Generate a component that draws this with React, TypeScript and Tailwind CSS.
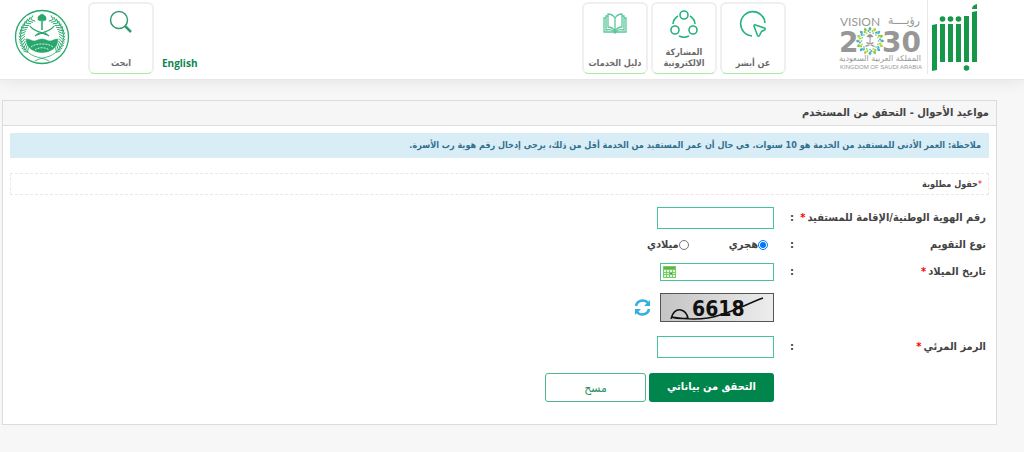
import { useState } from 'react';
import type { ReactNode } from 'react';

const captcha = '6618';

function Tile({ label, children }: { label: string; children: ReactNode }) {
  return (
    <button className="flex h-[72px] w-[66px] flex-col items-center justify-between rounded-md border-2 border-b border-x-[#efefef] border-t-[#efefef] border-b-[#a5ec9b] bg-white pt-1 pb-1 text-[9px] leading-[11px] font-bold text-[#6b6b6b]">
      {children}
      <span className="w-full text-center">{label}</span>
    </button>
  );
}

function AbsherLogo() {
  return (
    <svg className="h-[72px] w-[50px]" viewBox="0 0 50 72" aria-label="أبشر" fill="#16984a">
      <path d="M4 23l5-1v46l-5 1zM12 22h5v38h-5zM20 22h5v38h-5zM28 22h5v38h-5zM36 14h5v46h-5zM44 10l5-1v51h-5z" />
      <path d="M44 7c0-3 2-4 5-5v5z" />
      <circle cx="14.500" cy="17" r="2.800" />
      <circle cx="22.500" cy="17" r="2.800" />
      <circle cx="30.500" cy="17" r="2.800" />
      <circle cx="38.500" cy="66" r="2.800" />
    </svg>
  );
}

function VisionLogo() {
  const colors = ['#4fb3a2', '#b5d334', '#3fb2d0', '#8cc63f'];
  return (
    <svg className="h-[60px] w-[84px]" viewBox="0 0 84 60" direction="ltr" fill="#979797" fontFamily="Lato, sans-serif">
      <text x="1" y="14" fontSize="12">VISION</text>
      <text x="81" y="12" fontSize="12" textAnchor="end" fontFamily="DejaVu Sans Condensed, DejaVu Sans, sans-serif">رؤيــــة</text>
      <text x="0" y="40" fontSize="28" fontWeight="bold" fontFamily="DejaVu Sans, sans-serif">2</text>
      <text x="43" y="40" fontSize="28" fontWeight="bold" fontFamily="DejaVu Sans, sans-serif">30</text>
      <circle cx="31" cy="29" r="12" fill="#fff" />
      {Array.from({ length: 16 }, (_, i) => (
        <g key={i} transform={`rotate(${i * 22.5} 31 29)`}>
          <path d="M31 14.500l1.600 2.300-1.600 2.300-1.600-2.300z" fill={colors[i % 4]} />
          <path d="M33.500 17.500l1.200 1.500-1.200 1.500-1.200-1.500z" fill={colors[(i + 1) % 4]} />
          <circle cx="31" cy="20.500" r="0.800" fill={colors[(i + 2) % 4]} />
        </g>
      ))}
      <path d="M30.500 25h1v7h-1zM31 25.500l-3.500-.5c1-2 2.500-3 3.500-3s2.500 1 3.500 3zM26 34l8-4 1 1-8 4zM36 34l-8-4-1 1 8 4z" />
      <text x="82" y="49" fontSize="8" textAnchor="end" fontFamily="DejaVu Sans, sans-serif">المملكة العربية السعودية</text>
      <text x="1" y="57" fontSize="6" fontFamily="Liberation Sans, sans-serif">KINGDOM OF SAUDI ARABIA</text>
    </svg>
  );
}

function Emblem() {
  const leaves = [];
  for (let a = -60; a <= 45; a += 8) leaves.push(a);
  return (
    <svg className="size-14" viewBox="0 0 56 56" fill="none" stroke="#27a76b">
      <circle cx="28" cy="28" r="26.500" strokeWidth="1.300" />
      <path d="M14 10C2 23 5 40 20 47c5 2 10 2 15 5M42 10c12 13 9 30-6 37-5 2-10 2-15 5" strokeWidth="0.800" />
      {leaves.map((a) => (
        <g key={a} strokeWidth="0.900">
          <path transform={`rotate(${-a} 28 28)`} d="M7 29l-2-4M7 29l4-3" />
          <path transform={`rotate(${a} 28 28)`} d="M49 29l2-4M49 29l-4-3" />
        </g>
      ))}
      <path d="M28 9v12" strokeWidth="1.500" />
      <path d="M28 9l-1 3-3-1 0-3 2-2 2-1 2 1 2 2v3l-3 1z" fill="#27a76b" strokeWidth="0.500" />
      <path d="M16 17c3 5 8 5 17 9M40 17c-3 5-8 5-17 9M21 27l4-3M35 27l-4-3" strokeWidth="1.200" />
      <path d="M12 30c4 0 6 2 8 2s5-2 8-2 6 2 8 2 4-2 8-2c0 18-32 18-32 0z" fill="#27a76b" strokeWidth="0.500" />
      <path d="M17 38c3-2 5-3 11-3s8 1 11 3M21 41c3-3 11-3 14 0" stroke="#d7f2e3" strokeDasharray="2 1" />
    </svg>
  );
}

function Captcha() {
  return (
    <svg className="h-[29px] w-[114px] border border-[#555]" viewBox="0 0 112 27" direction="ltr">
      <defs>
        <linearGradient id="shade">
          <stop stopColor="#c4c4c4" />
          <stop offset="1" stopColor="#ededed" />
        </linearGradient>
      </defs>
      <rect width="112" height="27" fill="url(#shade)" />
      <text x="31" y="22" fontSize="21" fontWeight="bold" fontFamily="DejaVu Sans Condensed, DejaVu Sans, sans-serif" fill="#111">{captcha}</text>
      <path d="M10 25c1-6 5-10 10-9 4 1 6 4 7 8-6 1-10 1-17-1 19 3 35 3 49-2 14-4 27-11 43-17" fill="none" stroke="#111" strokeWidth="1.500" />
    </svg>
  );
}

function Label({ text, htmlFor, required }: { text: string; htmlFor?: string; required?: boolean }) {
  return (
    <div className="flex w-[212px] shrink-0 items-center justify-between pe-4 font-bold">
      <label htmlFor={htmlFor} className="whitespace-nowrap">
        {text}
        {required && <span className="ms-0.5 text-[#f00]">*</span>}
      </label>
      <span>:</span>
    </div>
  );
}

export default function App() {
  const [calendar, setCalendar] = useState('hijri');

  return (
    <div dir="rtl" className="min-h-screen bg-[#f7f7f7] font-['DejaVu_Sans_Condensed','DejaVu_Sans',sans-serif] text-[11px] text-[#444]">
      <header className="flex h-20 items-start justify-between border-b border-[#e8e8e8] bg-white ps-[46px] pe-[14px] shadow-[0_2px_14px_rgba(0,0,0,0.08)]">
        <div className="flex">
          <a href="#" className="border-e border-[#e8e8e8] pt-0.5">
            <AbsherLogo />
          </a>
          <a href="#" className="ms-1 pt-3">
            <VisionLogo />
          </a>
          <nav className="ms-[53px] flex gap-[3px] pt-0.5">
            <Tile label="عن أبشر">
              <svg className="mt-0.5 size-7" viewBox="0 0 28 28" fill="none" stroke="#25b47e" strokeWidth="1.600" strokeLinejoin="round">
                <path d="M13 26A12.200 12.200 0 1 1 26 13" />
                <path d="M15 16c0-1 .5-1.500 1.500-1l9 3c1 .5 1 1.500 0 2l-3 1.500-2 4c-.5 1-1.500 1-2 0z" />
              </svg>
            </Tile>
            <Tile label="المشاركة الالكترونية">
              <svg className="mt-0.5 size-7 shrink-0" viewBox="0 0 28 28" fill="none" stroke="#25b47e" strokeWidth="1.600">
                <circle cx="14" cy="5" r="4" />
                <circle cx="5" cy="20" r="4" />
                <circle cx="23" cy="20" r="4" />
                <path d="M8 6c-3 2-5 5-5 8M20 6c3 2 5 5 5 8M9 26c3 1.500 7 1.500 10 0" />
              </svg>
            </Tile>
            <Tile label="دليل الخدمات">
              <svg className="mt-1 h-6 w-6" viewBox="0 0 24 24" fill="none" stroke="#5cc79c" strokeWidth="1.300">
                <path d="M12 6C10 3 8 2 5 2v13c3 0 5 1 7 4 2-3 4-4 7-4V2c-3 0-5 1-7 4zM12 6v13" />
                <path d="M5 4H3v14c4-1 7 0 9 2 2-2 5-3 9-2V4h-2M3 6H1v14h9l2 1 2-1h9V6h-2" />
              </svg>
            </Tile>
          </nav>
        </div>
        <div className="flex items-start">
          <a href="#" className="mt-14 me-2 font-['Open_Sans',sans-serif] text-[10px] leading-[14px] font-bold text-[#0b8552]">English</a>
          <div className="pt-0.5">
            <Tile label="ابحث">
              <svg className="mt-0.5 size-6" viewBox="0 0 24 24" fill="none" stroke="#349b73">
                <circle cx="10" cy="10" r="8.500" strokeWidth="1.500" />
                <path d="M16 16l6 6" strokeWidth="2.500" />
              </svg>
            </Tile>
          </div>
          <div className="ms-[18px] pt-[9px]">
            <Emblem />
          </div>
        </div>
      </header>

      <main className="ms-[27px] me-[2px] mt-5 border border-[#dcdcdc] bg-white">
        <h1 className="border-b border-[#dcdcdc] bg-[#f6f6f6] px-[7px] leading-6 font-bold">
          مواعيد الأحوال - التحقق من المستخدم
        </h1>
        <div className="px-[7px] pt-[7px] pb-[22px]">
          <p className="bg-[#d9edf7] px-2 text-[9px] leading-[25px] font-bold text-[#31708f]">
            ملاحظة: العمر الأدنى للمستفيد من الخدمة هو 10 سنوات. في حال أن عمر المستفيد من الخدمة أقل من ذلك، يرجى إدخال رقم هوية رب الأسرة.
          </p>
          <p className="mt-[15px] border border-dashed border-[#f3e3e5] px-1.5 text-[9px] leading-5 font-bold">
            <span className="font-normal text-[#f00]">*</span>
            حقول مطلوبة
          </p>

          <form className="mt-3 px-[3px]" onSubmit={(e) => e.preventDefault()}>
            <div className="flex h-[22px]">
              <Label text="رقم الهوية الوطنية/الإقامة للمستفيد" htmlFor="id-number" required />
              <input id="id-number" className="w-[117px] border border-[#45c596] px-1" />
            </div>
            <div className="mt-1 flex h-6 items-center">
              <Label text="نوع التقويم" />
              <div className="flex items-center gap-10 ps-1.5 font-bold">
                <label className="flex items-center">
                  <input type="radio" name="calendar" className="size-[10px] accent-[#0075ff]" checked={calendar === 'hijri'} onChange={() => setCalendar('hijri')} />
                  هجري
                </label>
                <label className="flex items-center">
                  <input type="radio" name="calendar" className="size-[10px]" checked={calendar === 'gregorian'} onChange={() => setCalendar('gregorian')} />
                  ميلادي
                </label>
              </div>
            </div>
            <div className="mt-1.5 flex h-[18px]">
              <Label text="تاريخ الميلاد" htmlFor="birth-date" required />
              <div className="flex w-[114px] items-center border border-[#45c596] pe-0.5">
                <input id="birth-date" className="min-w-0 flex-1 px-1 outline-none" />
                <button type="button" aria-label="التقويم">
                  <svg className="h-3 w-[13px]" viewBox="0 0 13 12">
                    <path fill="#7fca68" d="M0 0h13v12H0z" />
                    <path fill="#5ab743" d="M1 1h11v2H1z" />
                    <path fill="#e2f6da" d="M1 4h2v2H1zM4 4h2v2H4zM7 4h2v2H7zM10 4h2v2h-2zM1 7h2v1H1zM4 7h2v1H4zM10 7h2v1h-2zM1 9h2v2H1zM4 9h2v2H4zM7 9h2v2H7zM10 9h2v2h-2z" />
                    <path fill="#3183c4" d="M7 7h2v1H7z" />
                  </svg>
                </button>
              </div>
            </div>
            <div className="mt-3 flex items-center gap-[9px] ps-[212px]">
              <Captcha />
              <button type="button" aria-label="تحديث الرمز">
                <svg className="size-[17px]" viewBox="0 0 17 17" fill="none" stroke="#35aee2" strokeWidth="2.500">
                  <path d="M2 7c1-6 9-7 12-3M15 10c-1 6-9 7-12 3" />
                  <path d="M16 1v6h-6zM1 16v-6h6z" fill="#35aee2" stroke="none" />
                </svg>
              </button>
            </div>
            <div className="mt-3.5 flex h-[22px]">
              <Label text="الرمز المرئي" htmlFor="code" required />
              <input id="code" className="w-[117px] border border-[#45c596] px-1" />
            </div>
            <div className="mt-[15px] flex gap-[3px] ps-[212px]">
              <button className="h-[29px] w-[125px] rounded-[3px] bg-[#00854d] font-bold text-white">التحقق من بياناتي</button>
              <button type="reset" className="h-[29px] w-[101px] rounded-[3px] border border-[#4db88a] bg-white text-[12px] text-[#1f8f60]">مسح</button>
            </div>
          </form>
        </div>
      </main>
    </div>
  );
}
